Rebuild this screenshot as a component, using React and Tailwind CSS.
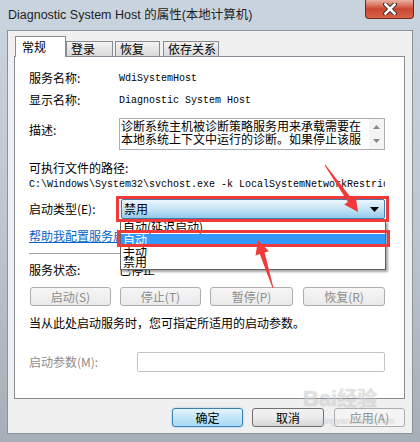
const mono = "font-['Liberation_Mono',monospace]";

const TabButton = ({ label, width }) => (
  <div
    className={`h-[15px] ${width} border border-b-0 border-[#898c95] bg-gradient-to-b from-[#f3f3f3] to-[#d9d9d9] pl-[4px] text-[12px] leading-[14px]`}
  >
    {label}
  </div>
);

const PushButton = ({ label, width }) => (
  <div
    className={`flex h-[19px] ${width} items-center justify-center rounded-[3px] border border-[#adadad] bg-gradient-to-b from-[#f6f6f6] to-[#eaeaea] text-[12px] leading-[14px] text-[#8d8d8d]`}
  >
    {label}
  </div>
);

const App = () => {
  return (
    <div className="relative h-[442px] w-[420px] overflow-hidden bg-gradient-to-b from-[#cad4df] via-[#bdc7d2] to-[#a6aeb7] font-['Noto_Sans_CJK_SC',sans-serif] text-[12px] text-black">
      {/* title bar */}
      <div className="flex h-[30px] items-start justify-between">
        <div className="pl-[8px] pt-[6px] font-['Liberation_Sans','Noto_Sans_CJK_SC',sans-serif] text-[12.5px] leading-[18px] text-[#1e1e1e]">
          Diagnostic System Host 的属性(本地计算机)
        </div>
        <div className="mr-[6px] flex h-[19px] w-[49px] items-center justify-center rounded-b-[4px] border border-t-0 border-[#6b2a20] bg-gradient-to-b from-[#eab0a1] via-[#c9462f] to-[#d9644a]">
          <svg width="14" height="12" viewBox="0 0 14 12">
            <path d="M2 1 L12 11 M12 1 L2 11" stroke="#3a2a2a" strokeWidth="4.5" strokeLinecap="square" />
            <path d="M2.5 1.5 L11.5 10.5 M11.5 1.5 L2.5 10.5" stroke="#ffffff" strokeWidth="2.6" strokeLinecap="square" />
          </svg>
        </div>
      </div>

      {/* client area */}
      <div className="mx-[7px] h-[404px] border border-[#8e9297] bg-[#f0f0f0] pl-[6px] pr-[7px] pt-[5px]">
        {/* tabs */}
        <div className="flex h-[20px] items-end pl-px">
          <div className="relative z-10 -mb-px h-[21px] w-[51px] border border-b-0 border-[#898c95] bg-white pl-[6px] pt-[3px] text-[12px] leading-[14px]">
            常规
          </div>
          <TabButton label="登录" width="w-[47px]" />
          <div className="w-[2px]" />
          <TabButton label="恢复" width="w-[45px]" />
          <div className="w-[3px]" />
          <TabButton label="依存关系" width="w-[56px]" />
        </div>

        {/* tab panel */}
        <div className="h-[343px] border border-[#898c95] bg-white pl-[14px] pt-[10px]">
          <div className="flex h-[22px] items-center">
            <div className="w-[90px]">服务名称:</div>
            <div className={`${mono} text-[10px]`}>WdiSystemHost</div>
          </div>
          <div className="flex h-[22px] items-center">
            <div className="w-[90px]">显示名称:</div>
            <div className={`${mono} text-[10px]`}>Diagnostic System Host</div>
          </div>

          <div className="mt-[7px] flex">
            <div className="h-[24px] w-[90px] leading-[24px]">描述:</div>
            <div className="flex h-[32px] w-[266px] border border-[#abadb3] bg-white">
              <div className="flex-1 overflow-hidden pl-px text-[12px] leading-[13px]">
                <div className="whitespace-nowrap">诊断系统主机被诊断策略服务用来承载需要在</div>
                <div className="whitespace-nowrap">本地系统上下文中运行的诊断。如果停止该服</div>
              </div>
              <div className="flex w-[15px] flex-col items-center justify-between bg-[#f4f4f4] py-[6px]">
                <svg width="7" height="4" viewBox="0 0 7 4"><path d="M0 4 L3.5 0 L7 4 Z" fill="#8a8a8a" /></svg>
                <svg width="7" height="4" viewBox="0 0 7 4"><path d="M0 0 L3.5 4 L7 0 Z" fill="#8a8a8a" /></svg>
              </div>
            </div>
          </div>

          <div className="mt-[9px] h-[18px] leading-[18px]">可执行文件的路径:</div>
          <div className={`h-[16px] w-[356px] overflow-hidden whitespace-nowrap ${mono} text-[10px] leading-[16px]`}>
            C:\Windows\System32\svchost.exe -k LocalSystemNetworkRestricted
          </div>

          <div className="mt-[6px] flex items-center">
            <div className="w-[92px]">启动类型(E):</div>
            <div className="flex h-[20px] w-[264px] items-center justify-between rounded-[2px] border border-[#3c7dae] bg-gradient-to-b from-[#eaf6fd] via-[#c6e4f6] to-[#92c9e8] pl-[2px] pr-[5px]">
              <span className="leading-[14px]">禁用</span>
              <svg width="9" height="5" viewBox="0 0 9 5"><path d="M0 0 L9 0 L4.5 5 Z" fill="#000" /></svg>
            </div>
          </div>

          <div className="mt-[7px] flex h-[20px] items-center">
            <span className="text-[#0066cc] underline">帮助我配置服务启动选项。</span>
          </div>

          <div className="mt-[7px] h-px w-[356px] bg-[#a0a0a0]" />

          <div className="mt-[6px] flex h-[20px] items-center">
            <div className="w-[90px]">服务状态:</div>
            <div>已停止</div>
          </div>

          <div className="mt-[7px] flex pl-px">
            <PushButton label="启动(S)" width="w-[81px]" />
            <div className="w-[9px]" />
            <PushButton label="停止(T)" width="w-[81px]" />
            <div className="w-[9px]" />
            <PushButton label="暂停(P)" width="w-[83px]" />
            <div className="w-[10px]" />
            <PushButton label="恢复(R)" width="w-[82px]" />
          </div>

          <div className="mt-[7px] flex h-[20px] items-center">当从此处启动服务时，您可指定所适用的启动参数。</div>

          <div className="mt-[19px] flex items-center">
            <div className="w-[108px] text-[#8d8d8d]">启动参数(M):</div>
            <div className="h-[20px] w-[248px] rounded-[2px] border border-[#c4c4c4] bg-white" />
          </div>
        </div>

        {/* dialog buttons */}
        <div className="mt-[9px] flex justify-end">
          <div className="flex h-[19px] w-[71px] items-center justify-center rounded-[3px] border border-[#3c7fb1] bg-gradient-to-b from-[#e5f4fc] via-[#c4e5f6] to-[#a7d9f5] shadow-[0_0_2px_#6fc3f0] leading-[14px]">
            确定
          </div>
          <div className="w-[9px]" />
          <div className="flex h-[19px] w-[72px] items-center justify-center rounded-[3px] border border-[#707070] bg-gradient-to-b from-[#f2f2f2] via-[#ebebeb] to-[#d6d6d6] leading-[14px]">
            取消
          </div>
          <div className="w-[10px]" />
          <div className="flex h-[19px] w-[71px] items-center justify-center rounded-[3px] border border-[#adadad] bg-[#f4f4f4] leading-[14px] text-[#8d8d8d]">
            应用(A)
          </div>
        </div>
      </div>

      {/* open dropdown list */}
      <div className="absolute left-[120px] top-[221px] h-[49px] w-[266px] border border-[#646464] bg-white shadow-[2px_2px_2px_rgba(0,0,0,0.35)]">
        <div className="h-[12px] overflow-hidden pl-[2px] leading-[10px]">自动(延迟启动)</div>
        <div className="h-[11px] bg-[#3399ff] pl-[2px] leading-[11px] text-white">自动</div>
        <div className="h-[11px] pl-[2px] leading-[12px]">手动</div>
        <div className="h-[12px] pl-[2px] leading-[12px]">禁用</div>
      </div>

      {/* red annotation boxes */}
      <div className="absolute left-[116px] top-[196px] h-[26px] w-[273px] border-[3px] border-[#f03a3a]" />
      <div className="absolute left-[117px] top-[230px] h-[17px] w-[273px] border-[3px] border-[#f03a3a]" />

      {/* red arrows */}
      <svg className="pointer-events-none absolute left-0 top-0" width="420" height="442" viewBox="0 0 420 442">
        <polygon
          points="324.6,165.3 347.9,202 344.2,204.6 358,212 355.7,196.5 352,199.1 325.4,164.7"
          fill="#f23a3a"
        />
        <polygon
          points="273.5,287.9 264.6,252.6 268.9,251.3 258,240 255.5,255.5 259.8,254.1 272.5,288.1"
          fill="#f23a3a"
        />
      </svg>

      {/* watermark */}
      <div className="pointer-events-none absolute left-[303px] top-[386px] font-['Liberation_Sans',sans-serif] text-[22px] font-bold leading-[24px] text-white/50 [text-shadow:0_0_1px_rgba(0,0,0,0.25)]">
        Bai<span className="font-['Noto_Sans_CJK_SC',sans-serif] text-[20px]">经验</span>
      </div>
      <div className="pointer-events-none absolute left-[322px] top-[416px] font-['Liberation_Sans',sans-serif] text-[9px] leading-[10px] text-white/50 [text-shadow:0_0_1px_rgba(0,0,0,0.25)]">
        jingyan.baidu.com
      </div>
    </div>
  );
};

export default App;
